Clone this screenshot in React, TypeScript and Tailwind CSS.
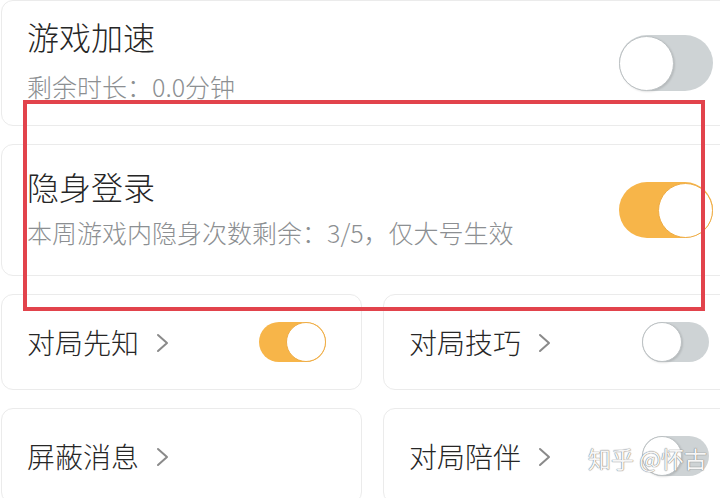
function Toggle({ on, size }: { on: boolean; size: "lg" | "sm" }) {
  const track =
    size === "lg" ? "h-[56px] w-[94px]" : "h-[40px] w-[67px]";
  const knob = size === "lg" ? "h-[55px] w-[55px]" : "h-[40px] w-[40px]";
  return (
    <div
      className={`flex shrink-0 items-center rounded-full ${track} ${
        on ? "justify-end bg-[#f7b549]" : "justify-start bg-[#ced3d5]"
      }`}
    >
      <div
        className={`rounded-full bg-white ${knob} ${
          on
            ? "border-[1.5px] border-[#eeac45]"
            : "border-[1.5px] border-[#bcc1c3] shadow-[1px_1px_2px_rgba(0,0,0,0.12)]"
        }`}
      />
    </div>
  );
}

function Chevron() {
  return (
    <svg width="14" height="20" viewBox="0 0 14 20" className="ml-[17px] mt-[2px]">
      <polyline
        points="2,2 11,10 2,18"
        fill="none"
        stroke="#8a8a8a"
        strokeWidth="2"
        strokeLinecap="round"
        strokeLinejoin="round"
      />
    </svg>
  );
}

function SmallCard({ label, on, pr }: { label: string; on: boolean; pr: string }) {
  return (
    <div
      className={`flex h-[96px] items-center justify-between rounded-xl border border-[#ebebeb] bg-white pl-[25px] ${pr}`}
    >
      <div className="flex items-center">
        <span className="text-[28px] font-light leading-none text-[#262626]">{label}</span>
        <Chevron />
      </div>
      <Toggle on={on} size="sm" />
    </div>
  );
}

export default function App() {
  return (
    <div className="relative h-[498px] w-[720px] overflow-hidden bg-white font-['Noto_Sans_CJK_SC',sans-serif]">
      <div className="flex w-[760px] flex-col gap-[18px] pl-px">
        {/* 游戏加速 */}
        <div className="flex h-[126px] items-center justify-between rounded-xl border border-[#ebebeb] bg-white pl-[25px] pr-[46px]">
          <div className="flex flex-col self-start pt-[16px]">
            <span className="text-[32px] font-light leading-[38px] text-[#262626]">游戏加速</span>
            <span className="mt-[16px] text-[25px] font-light leading-[30px] text-[#8c8f92]">
              剩余时长：0.0分钟
            </span>
          </div>
          <Toggle on={false} size="lg" />
        </div>

        {/* 隐身登录 */}
        <div className="flex h-[132px] items-center justify-between rounded-xl border border-[#ebebeb] bg-white pl-[25px] pr-[46px]">
          <div className="flex flex-col self-start pt-[22px]">
            <span className="text-[32px] font-light leading-[38px] text-[#262626]">隐身登录</span>
            <span className="mt-[12px] text-[25px] font-light leading-[30px] text-[#8c8f92]">
              本周游戏内隐身次数剩余：3/5，仅大号生效
            </span>
          </div>
          <Toggle on={true} size="lg" />
        </div>

        <div className="grid grid-cols-[361px_1fr] gap-[21px]">
          <SmallCard label="对局先知" on={true} pr="pr-[35px]" />
          <SmallCard label="对局技巧" on={false} pr="pr-[50px]" />
        </div>

        <div className="grid grid-cols-[361px_1fr] gap-[21px]">
          <div className="flex h-[96px] items-center rounded-xl border border-[#ebebeb] bg-white pl-[25px]">
            <span className="text-[28px] font-light leading-none text-[#262626]">屏蔽消息</span>
            <Chevron />
          </div>
          <SmallCard label="对局陪伴" on={false} pr="pr-[50px]" />
        </div>
      </div>

      {/* red highlight box */}
      <div className="pointer-events-none absolute left-[23px] top-[100px] h-[211px] w-[682px] border-4 border-[#e2434c]" />

      {/* watermark */}
      <div className="pointer-events-none absolute left-[588px] top-[447px] text-[23px] leading-none text-[#f6f6f6] [text-shadow:0_0_1px_#777,0_0_1px_#777]">
        知乎 @怀古
      </div>
    </div>
  );
}
